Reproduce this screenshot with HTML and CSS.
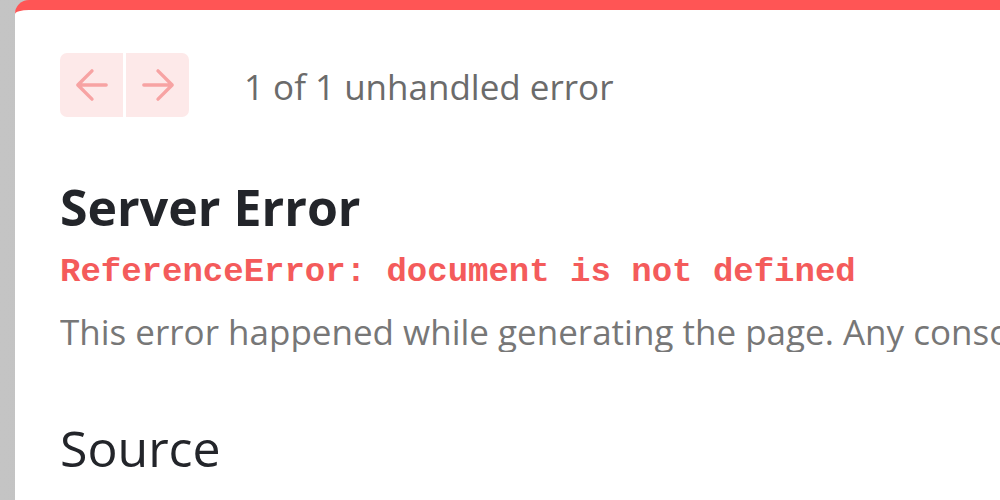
FILE: index.html
```html
<!DOCTYPE html>
<html lang="en">
<head>
<meta charset="utf-8">
<title>Server Error</title>
<link rel="stylesheet" href="styles.css">
</head>
<body>
<div class="backdrop">
  <div class="dialog">
    <div class="nav">
      <div class="nav-buttons">
        <button class="nav-btn" aria-label="previous">
          <svg width="34" height="34" viewBox="0 0 14 14" fill="none"><path d="M6.99996 1.16666L1.16663 6.99999L6.99996 12.8333M12.8333 6.99999H1.99996H12.8333Z" stroke="currentColor" stroke-width="1.4" stroke-linecap="round" stroke-linejoin="round"/></svg>
        </button>
        <button class="nav-btn" aria-label="next">
          <svg width="34" height="34" viewBox="0 0 14 14" fill="none"><path d="M6.99996 1.16666L12.8333 6.99999L6.99996 12.8333M1.16663 6.99999H12H1.16663Z" stroke="currentColor" stroke-width="1.4" stroke-linecap="round" stroke-linejoin="round"/></svg>
        </button>
      </div>
      <span class="count">1 of 1 unhandled error</span>
    </div>
    <h1 class="title">Server Error</h1>
    <p class="message">ReferenceError: document is not defined</p>
    <p class="desc">This error happened while generating the page. Any console logs will be displayed in the terminal window.</p>
    <h2 class="section">Source</h2>
  </div>
</div>
</body>
</html>
```
FILE: styles.css
```css
html, body {
  margin: 0;
  padding: 0;
  height: 100%;
  overflow: hidden;
}
body {
  background: #bdbdbd;
  font-family: "Open Sans", "Noto Sans", sans-serif;
}
.backdrop {
  height: 100%;
  padding-left: 15px;
  background: linear-gradient(to right, #c4c4c4, #b2b2b2);
}
.dialog {
  height: 100%;
  background: #fff;
  border-top: 10px solid #ff5555;
  border-top-left-radius: 14px;
  padding: 43px 0 0 45px;
  box-sizing: border-box;
  overflow: hidden;
}
.nav {
  display: flex;
  align-items: center;
  height: 64px;
}
.nav-buttons {
  display: flex;
  gap: 3px;
}
.nav-btn {
  width: 63px;
  height: 64px;
  border: none;
  padding: 0;
  margin: 0;
  background: #fde9e9;
  color: #f7a3a3;
  display: flex;
  align-items: center;
  justify-content: center;
}
.nav-btn:first-child {
  border-radius: 7px 0 0 7px;
}
.nav-btn:last-child {
  border-radius: 0 7px 7px 0;
}
.count {
  margin-left: 55px;
  font-size: 35px;
  color: #6b6b6b;
  position: relative;
  top: 1px;
  white-space: nowrap;
}
.title {
  margin: 60px 0 0;
  font-size: 50px;
  font-weight: 700;
  line-height: 60px;
  color: #23252a;
  white-space: nowrap;
}
.message {
  margin: 15px 0 0;
  font-family: "Liberation Mono", "DejaVu Sans Mono", monospace;
  font-weight: 700;
  font-size: 34px;
  line-height: 40px;
  color: #f45b5b;
  white-space: nowrap;
}
.desc {
  margin: 20px 0 0;
  font-size: 35px;
  line-height: 40px;
  color: #777;
  white-space: nowrap;
  overflow: hidden;
}
.section {
  margin: 68px 0 0;
  font-size: 50px;
  font-weight: 400;
  line-height: 56px;
  color: #23252a;
  white-space: nowrap;
}
```
